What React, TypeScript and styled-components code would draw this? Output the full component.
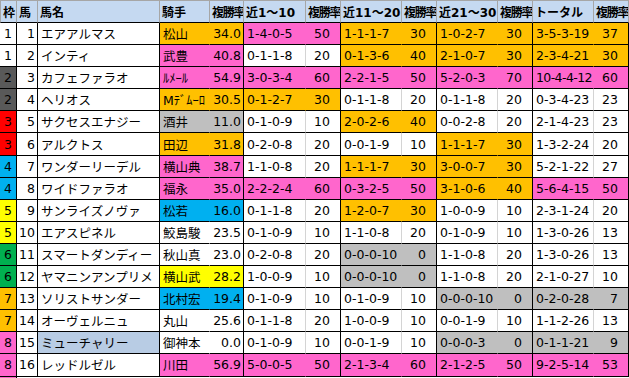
import React from 'react'
import styled, { createGlobalStyle } from 'styled-components'

const GlobalStyle = createGlobalStyle`
  html, body {
    margin: 0;
    padding: 0;
    background: #ffffff;
  }
`

const COLORS: Record<string, string> = {
  w: '#ffffff',
  o: '#ffc000',
  p: '#ff66cc',
  g: '#bfbfbf',
  c: '#00b0f0',
  y: '#ffff00',
  b: '#b8cce4',
}

const FRAME_COLORS: Record<number, string> = {
  1: '#ffffff',
  2: '#595959',
  3: '#ff0000',
  4: '#00b0f0',
  5: '#ffff00',
  6: '#00b050',
  7: '#ffc000',
  8: '#ff66cc',
}

const GRID_LINE = '#d4d4d4'

const Sheet = styled.div`
  display: grid;
  grid-template-columns: 17px 21px 122px 50px 34px 62px 35px 61px 35px 61px 35px 61px 35px;
  grid-template-rows: 23px;
  grid-auto-rows: 22.1px;
  width: 629px;
  height: 378px;
  overflow: hidden;
  font-family: 'DejaVu Sans', 'Noto Sans CJK JP', sans-serif;
  font-size: 12.5px;
  color: #000000;
`

const HeadCell = styled.div<{ $tight?: boolean; $first?: boolean }>`
  box-sizing: border-box;
  display: flex;
  align-items: center;
  padding-left: 2px;
  background: #c5d9f1;
  border-top: 1px solid #a6a6a6;
  border-right: 1px solid #a6a6a6;
  border-left: ${p => (p.$first ? '1px solid #a6a6a6' : 'none')};
  border-bottom: 1px solid #000000;
  font-weight: bold;
  font-size: 12px;
  letter-spacing: ${p => (p.$tight ? '-1.2px' : '0')};
  white-space: nowrap;
  overflow: hidden;
`

const Cell = styled.div<{
  $bg: string
  $align?: 'left' | 'right' | 'center'
  $line?: string
  $tight?: boolean
  $rate?: boolean
}>`
  box-sizing: border-box;
  display: flex;
  align-items: center;
  justify-content: ${p =>
    p.$align === 'right' ? 'flex-end' : p.$align === 'center' ? 'center' : 'flex-start'};
  padding: ${p =>
    p.$rate ? '0 10px 0 0' : p.$align === 'right' ? '0 2px 0 0' : p.$align === 'center' ? '0' : '0 0 0 3px'};
  background: ${p => p.$bg};
  border-bottom: 1px solid #000000;
  border-right: 1px solid ${p => p.$line ?? '#000000'};
  letter-spacing: ${p => (p.$tight ? '-0.6px' : '0')};
  white-space: nowrap;
  overflow: visible;
  position: relative;
`

type Rec = [string, string, string]
type Row = [number, number, string, string, string, string, string, Rec[]]

const ROWS: Row[] = [
  [1, 1, 'エアアルマス', 'w', '松山', 'o', '34.0', [['1-4-0-5', '50', 'p'], ['1-1-1-7', '30', 'o'], ['1-0-2-7', '30', 'o'], ['3-5-3-19', '37', 'o']]],
  [1, 2, 'インティ', 'w', '武豊', 'p', '40.8', [['0-1-1-8', '20', 'w'], ['0-1-3-6', '40', 'o'], ['2-1-0-7', '30', 'o'], ['2-3-4-21', '30', 'o']]],
  [2, 3, 'カフェファラオ', 'w', 'ﾙﾒｰﾙ', 'p', '54.9', [['3-0-3-4', '60', 'p'], ['2-2-1-5', '50', 'p'], ['5-2-0-3', '70', 'p'], ['10-4-4-12', '60', 'p']]],
  [2, 4, 'ヘリオス', 'w', 'Mﾃﾞﾑｰﾛ', 'o', '30.5', [['0-1-2-7', '30', 'o'], ['0-1-1-8', '20', 'w'], ['0-1-1-8', '20', 'w'], ['0-3-4-23', '23', 'w']]],
  [3, 5, 'サクセスエナジー', 'w', '酒井', 'g', '11.0', [['0-1-0-9', '10', 'w'], ['2-0-2-6', '40', 'o'], ['0-0-2-8', '20', 'w'], ['2-1-4-23', '23', 'w']]],
  [3, 6, 'アルクトス', 'w', '田辺', 'o', '31.8', [['0-2-0-8', '20', 'w'], ['0-0-1-9', '10', 'w'], ['1-1-1-7', '30', 'o'], ['1-3-2-24', '20', 'w']]],
  [4, 7, 'ワンダーリーデル', 'w', '横山典', 'p', '38.7', [['1-1-0-8', '20', 'w'], ['1-1-1-7', '30', 'o'], ['3-0-0-7', '30', 'o'], ['5-2-1-22', '27', 'w']]],
  [4, 8, 'ワイドファラオ', 'w', '福永', 'p', '35.0', [['2-2-2-4', '60', 'p'], ['0-3-2-5', '50', 'p'], ['3-1-0-6', '40', 'o'], ['5-6-4-15', '50', 'p']]],
  [5, 9, 'サンライズノヴァ', 'w', '松若', 'c', '16.0', [['0-1-1-8', '20', 'w'], ['1-2-0-7', '30', 'o'], ['1-0-0-9', '10', 'w'], ['2-3-1-24', '20', 'w']]],
  [5, 10, 'エアスピネル', 'w', '鮫島駿', 'w', '23.5', [['0-1-0-9', '10', 'w'], ['1-1-0-8', '20', 'w'], ['0-1-0-9', '10', 'w'], ['1-3-0-26', '13', 'w']]],
  [6, 11, 'スマートダンディー', 'w', '秋山真', 'w', '23.0', [['0-2-0-8', '20', 'w'], ['0-0-0-10', '0', 'g'], ['1-1-0-8', '20', 'w'], ['1-3-0-26', '13', 'w']]],
  [6, 12, 'ヤマニンアンプリメ', 'w', '横山武', 'y', '28.2', [['1-0-0-9', '10', 'w'], ['0-0-0-10', '0', 'g'], ['1-1-0-8', '20', 'w'], ['2-1-0-27', '10', 'w']]],
  [7, 13, 'ソリストサンダー', 'w', '北村宏', 'c', '19.4', [['0-1-0-9', '10', 'w'], ['0-1-0-9', '10', 'w'], ['0-0-0-10', '0', 'g'], ['0-2-0-28', '7', 'g']]],
  [7, 14, 'オーヴェルニュ', 'w', '丸山', 'w', '25.6', [['0-1-1-8', '20', 'w'], ['1-0-0-9', '10', 'w'], ['0-0-1-9', '10', 'w'], ['1-1-2-26', '13', 'w']]],
  [8, 15, 'ミューチャリー', 'b', '御神本', 'w', '0.0', [['0-1-0-9', '10', 'w'], ['0-0-1-9', '10', 'w'], ['0-0-0-3', '0', 'g'], ['0-1-1-21', '9', 'g']]],
  [8, 16, 'レッドルゼル', 'w', '川田', 'p', '56.9', [['5-0-0-5', '50', 'p'], ['2-1-3-4', '60', 'p'], ['2-1-2-5', '50', 'p'], ['9-2-5-14', '53', 'p']]],
]

const HEADERS = ['枠', '馬', '馬名', '騎手', '複勝率', '近1～10', '複勝率', '近11～20', '複勝率', '近21～30', '複勝率', 'トータル', '複勝率']

export default function App() {
  return (
    <>
      <GlobalStyle />
      <Sheet>
        {HEADERS.map((h, i) => (
          <HeadCell key={'h' + i} $first={i === 0} $tight={h === '複勝率'}>
            {h}
          </HeadCell>
        ))}
        {ROWS.map(([frame, no, name, nameBg, jockey, jBg, jRate, recs]) => (
          <React.Fragment key={no}>
            <Cell $bg={FRAME_COLORS[frame]} $align="center">{frame}</Cell>
            <Cell $bg="#ffffff" $align="right">{no}</Cell>
            <Cell $bg={COLORS[nameBg]}>{name}</Cell>
            <Cell $bg={COLORS[jBg]} $line="transparent">{jockey}</Cell>
            <Cell $bg={COLORS[jBg]} $align="right">{jRate}</Cell>
            {recs.map(([rec, rate, bg], i) => (
              <React.Fragment key={i}>
                <Cell
                  $bg={COLORS[bg]}
                  $line={bg === 'w' ? GRID_LINE : 'transparent'}
                  $tight={rec.length > 8}
                >
                  {rec}
                </Cell>
                <Cell $bg={COLORS[bg]} $align="right" $rate>{rate}</Cell>
              </React.Fragment>
            ))}
          </React.Fragment>
        ))}
        {/* next row, cut off by the bottom edge */}
        <Cell $bg={FRAME_COLORS[8]} $align="center" />
      </Sheet>
    </>
  )
}
